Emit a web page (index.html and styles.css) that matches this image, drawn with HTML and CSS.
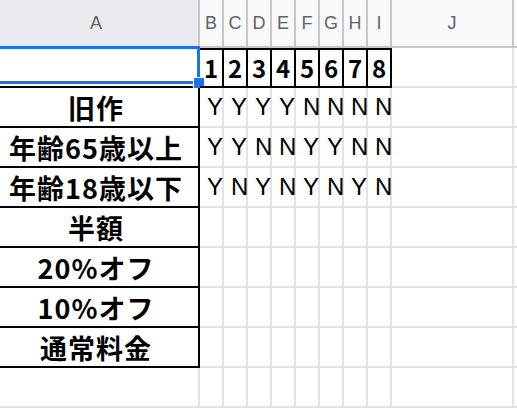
FILE: index.html
```html
<!DOCTYPE html>
<html lang="ja">
<head>
	<meta charset="UTF-8">
	<title>Sheet</title>
<link rel="stylesheet" href="styles.css">
</head>
<body>
<div class="sheet">
  <!-- column headers -->
  <div class="hdr hdr-sel">A</div>
  <div class="hdr">B</div><div class="hdr">C</div><div class="hdr">D</div><div class="hdr">E</div>
  <div class="hdr">F</div><div class="hdr">G</div><div class="hdr">H</div><div class="hdr">I</div>
  <div class="hdr">J</div><div class="hdr"></div>

  <!-- row 1 -->
  <div class="cell label first"><span class="selection"><span class="handle"></span></span></div>
  <div class="cell num boxed top">1</div><div class="cell num boxed top">2</div>
  <div class="cell num boxed top">3</div><div class="cell num boxed top">4</div>
  <div class="cell num boxed top">5</div><div class="cell num boxed top">6</div>
  <div class="cell num boxed top">7</div><div class="cell num boxed top">8</div>
  <div class="cell"></div><div class="cell"></div>

  <!-- row 2 -->
  <div class="cell label boxed">旧作</div>
  <div class="cell yn">Y</div><div class="cell yn">Y</div><div class="cell yn">Y</div><div class="cell yn">Y</div>
  <div class="cell yn">N</div><div class="cell yn">N</div><div class="cell yn">N</div><div class="cell yn">N</div>
  <div class="cell"></div><div class="cell"></div>

  <!-- row 3 -->
  <div class="cell label boxed">年齢65歳以上</div>
  <div class="cell yn">Y</div><div class="cell yn">Y</div><div class="cell yn">N</div><div class="cell yn">N</div>
  <div class="cell yn">Y</div><div class="cell yn">Y</div><div class="cell yn">N</div><div class="cell yn">N</div>
  <div class="cell"></div><div class="cell"></div>

  <!-- row 4 -->
  <div class="cell label boxed">年齢18歳以下</div>
  <div class="cell yn">Y</div><div class="cell yn">N</div><div class="cell yn">Y</div><div class="cell yn">N</div>
  <div class="cell yn">Y</div><div class="cell yn">N</div><div class="cell yn">Y</div><div class="cell yn">N</div>
  <div class="cell"></div><div class="cell"></div>

  <!-- row 5 -->
  <div class="cell label boxed">半額</div>
  <div class="cell"></div><div class="cell"></div><div class="cell"></div><div class="cell"></div>
  <div class="cell"></div><div class="cell"></div><div class="cell"></div><div class="cell"></div>
  <div class="cell"></div><div class="cell"></div>

  <!-- row 6 -->
  <div class="cell label boxed">20%オフ</div>
  <div class="cell"></div><div class="cell"></div><div class="cell"></div><div class="cell"></div>
  <div class="cell"></div><div class="cell"></div><div class="cell"></div><div class="cell"></div>
  <div class="cell"></div><div class="cell"></div>

  <!-- row 7 -->
  <div class="cell label boxed">10%オフ</div>
  <div class="cell"></div><div class="cell"></div><div class="cell"></div><div class="cell"></div>
  <div class="cell"></div><div class="cell"></div><div class="cell"></div><div class="cell"></div>
  <div class="cell"></div><div class="cell"></div>

  <!-- row 8 -->
  <div class="cell label boxed">通常料金</div>
  <div class="cell"></div><div class="cell"></div><div class="cell"></div><div class="cell"></div>
  <div class="cell"></div><div class="cell"></div><div class="cell"></div><div class="cell"></div>
  <div class="cell"></div><div class="cell"></div>

  <!-- row 9 -->
  <div class="cell"></div>
  <div class="cell"></div><div class="cell"></div><div class="cell"></div><div class="cell"></div>
  <div class="cell"></div><div class="cell"></div><div class="cell"></div><div class="cell"></div>
  <div class="cell"></div><div class="cell"></div>
</div>
</body>
</html>
```

FILE: styles.css
```css
body {
  margin: 0;
  background-color: #fff;
  overflow: hidden;
  font-family: "Liberation Sans", Arial, sans-serif;
}
.sheet {
  display: grid;
  grid-template-columns: 206px repeat(8, 24px) 122px 20px;
  grid-template-rows: 48px;
  grid-auto-rows: 40px;
  margin-left: -6px;
}
.hdr {
  box-sizing: border-box;
  display: flex;
  align-items: center;
  justify-content: center;
  background-color: #f8f9fa;
  color: #5f6368;
  font-size: 18px;
  border-right: 2px solid #c7c7c7;
  border-bottom: 2px solid #c7c7c7;
}
.hdr-sel {
  background-color: #e8eaed;
  border-bottom-color: #1a73e8;
}
.cell {
  box-sizing: border-box;
  position: relative;
  display: flex;
  align-items: center;
  color: #000;
  white-space: nowrap;
  border-right: 2px solid #e2e2e2;
  border-bottom: 2px solid #e2e2e2;
}
.label {
  justify-content: center;
  font-family: "Noto Sans CJK JP", sans-serif;
  font-weight: bold;
  font-size: 27px;
  letter-spacing: 1px;
}
.first {
  border-right-color: #000;
  border-bottom-color: #000;
}
.boxed {
  border-right-color: #000;
  border-bottom-color: #000;
}
.top {
  box-shadow: inset 0 2px 0 #000;
}
.num {
  justify-content: center;
  font-family: "Noto Sans CJK JP", sans-serif;
  font-weight: bold;
  font-size: 24px;
}
.yn {
  padding-left: 7px;
  font-size: 24px;
}
.selection {
  position: absolute;
  top: -2px;
  left: 0;
  right: -2px;
  bottom: 2px;
  border: 3px solid #1a73e8;
}
.handle {
  position: absolute;
  right: -8px;
  bottom: -8px;
  width: 10px;
  height: 10px;
  background-color: #1a73e8;
  border: 1px solid #fff;
}
```
